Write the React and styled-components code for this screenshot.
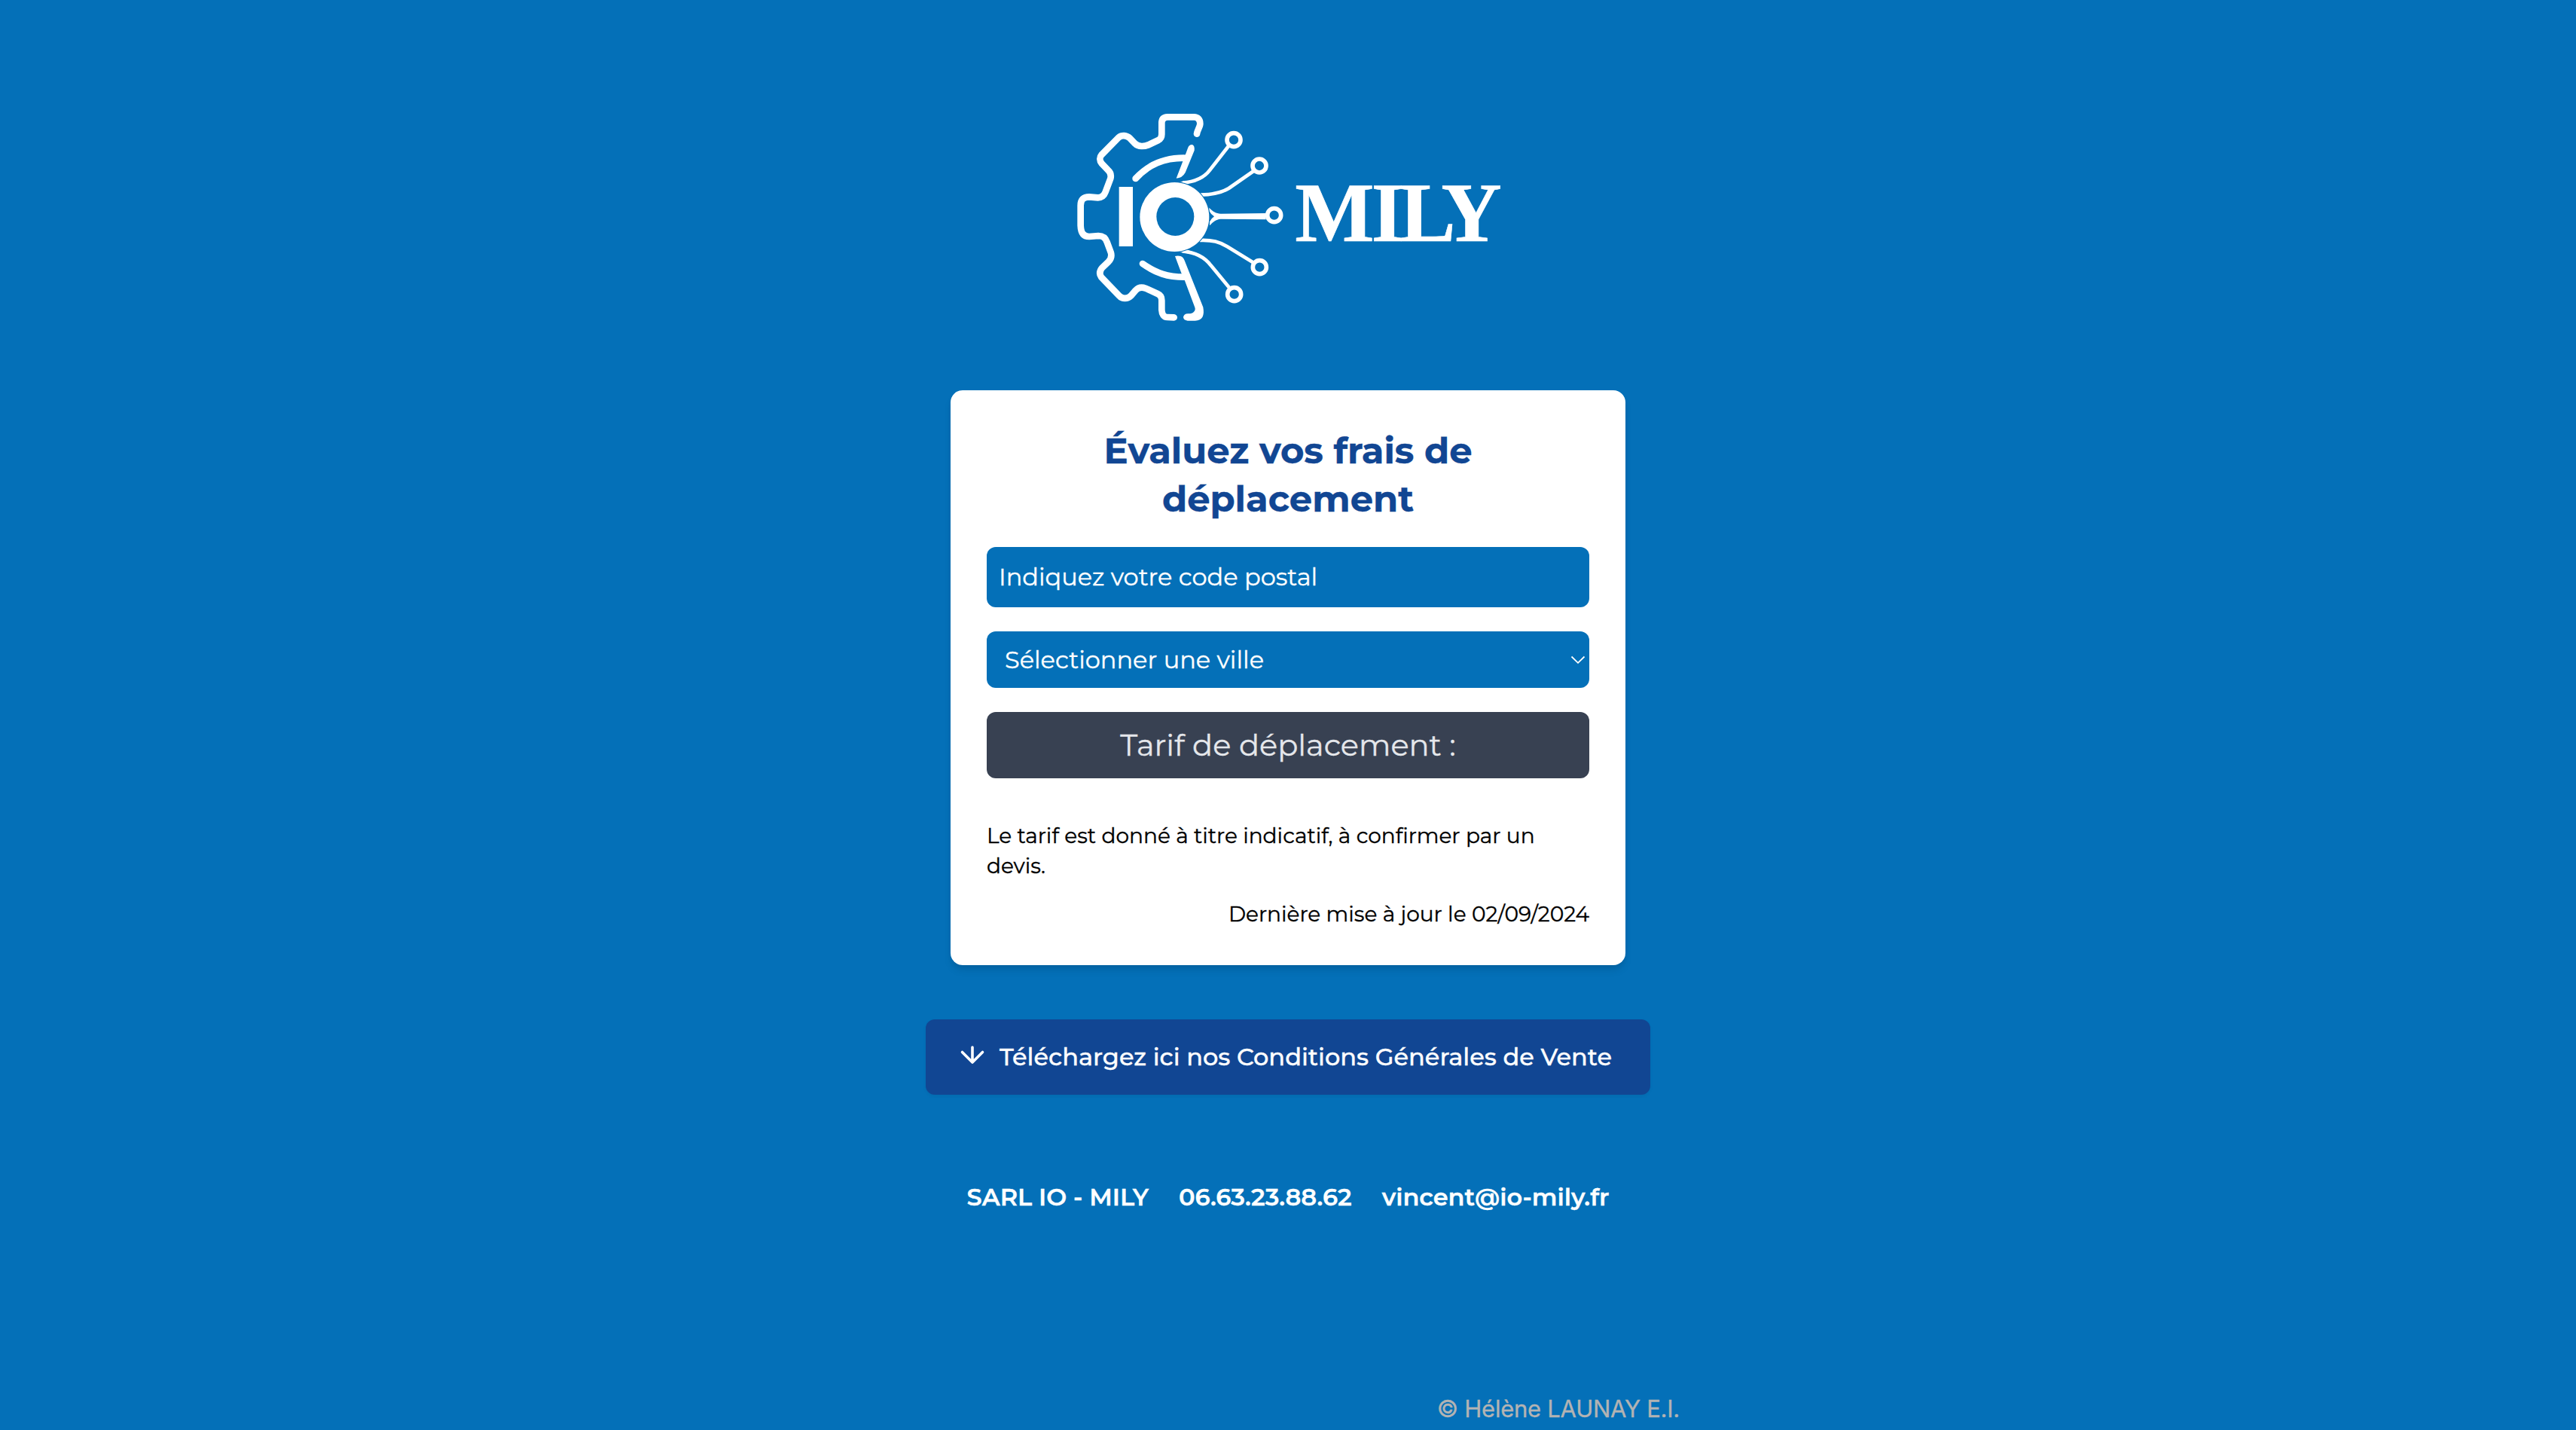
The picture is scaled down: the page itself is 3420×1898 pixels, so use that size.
import React from "react";
import styled, { createGlobalStyle } from "styled-components";

const BLUE = "#0470b8";
const NAVY = "#114693";

const GlobalStyle = createGlobalStyle`
  *, *::before, *::after { box-sizing: border-box; }
  body {
    margin: 0;
    background: ${BLUE};
    font-family: Montserrat, Inter, "Liberation Sans", sans-serif;
    -webkit-font-smoothing: antialiased;
    -webkit-text-stroke: 0.35px currentColor;
  }
  h1, p { margin: 0; }
`;

const Page = styled.div`
  min-height: 1898px;
  display: flex;
  flex-direction: column;
  align-items: center;
  padding-top: 130px;
  overflow: hidden;
`;

const LogoSvg = styled.svg`
  display: block;
  width: 600px;
  height: 310px;
  flex: none;
`;

const LogoText = styled.text`
  font-family: "Liberation Serif", "Times New Roman", serif;
  font-weight: 700;
  font-size: 111.5px;
  fill: #fff;
  stroke: #fff;
  stroke-width: 0.6px;
`;

const Card = styled.main`
  width: 896px;
  height: 763px;
  margin-top: 78px;
  padding: 48px;
  border-radius: 16px;
  background: #fff;
  box-shadow: 0 8px 12px -2px rgba(0, 0, 0, 0.1), 0 4px 8px -4px rgba(0, 0, 0, 0.1);
  display: flex;
  flex-direction: column;
`;

const Title = styled.h1`
  padding: 0 100px;
  color: ${NAVY};
  font-size: 48px;
  font-weight: 700;
  line-height: 64px;
  text-align: center;
`;

const PostalInput = styled.input`
  width: 100%;
  height: 80px;
  margin-top: 32px;
  padding: 0 16px 2px;
  border: 0;
  border-radius: 12px;
  background: ${BLUE};
  color: #fff;
  font: 400 32px/48px Montserrat, Inter, sans-serif;
  &::placeholder { color: #fff; opacity: 1; }
`;

const SelectWrap = styled.div`
  display: grid;
  align-items: center;
  margin-top: 32px;
`;

const CitySelect = styled.select`
  grid-area: 1 / 1;
  width: 100%;
  height: 75px;
  padding: 0 24px;
  border: 0;
  border-radius: 12px;
  appearance: none;
  background: ${BLUE};
  color: #fff;
  font: 400 32px/40px Montserrat, Inter, sans-serif;
`;

const Chevron = styled.svg`
  grid-area: 1 / 1;
  justify-self: end;
  width: 20px;
  height: 12px;
  margin-right: 5px;
  pointer-events: none;
`;

const Price = styled.p`
  height: 88px;
  margin-top: 32px;
  border-radius: 12px;
  background: #384152;
  color: #e5e7eb;
  font-size: 40px;
  line-height: 88px;
  text-align: center;
`;

const Note = styled.p`
  margin-top: ${(p) => p.$gap}px;
  color: #000;
  font-size: 28px;
  line-height: 40px;
  text-align: ${(p) => p.$align || "left"};
`;

const Download = styled.a`
  display: flex;
  align-items: center;
  width: 962px;
  height: 100px;
  margin-top: 72px;
  padding: 0 48px 2px 43px;
  border-radius: 12px;
  background: ${NAVY};
  color: #fff;
  font-size: 32px;
  font-weight: 500;
  white-space: nowrap;
  text-decoration: none;
  box-shadow: 0 2px 4px rgba(0, 0, 0, 0.05);
`;

const ArrowIcon = styled.svg`
  width: 40px;
  height: 40px;
  margin-right: 15px;
  flex: none;
`;

const Contact = styled.div`
  display: flex;
  gap: 40px;
  margin-top: 112px;
  color: #fff;
  font-size: 32px;
  font-weight: 600;
  line-height: 48px;
  white-space: nowrap;
`;

const Credit = styled.footer`
  width: 1040px;
  margin-top: auto;
  padding-bottom: 4px;
  color: #b3b3b3;
  font-family: Inter, "Liberation Sans", sans-serif;
  font-size: 31px;
  line-height: 48px;
  letter-spacing: -0.25px;
  text-align: right;
`;

const nodes = [[684, 167], [786, 270], [845, 467], [787, 674], [686, 782]];

function Logo() {
  return (
    <LogoSvg viewBox="0 0 600 310" role="img" aria-label="IO MILY">
      <g transform="scale(0.33333)" fill="none" stroke="#fff" strokeLinecap="round" strokeLinejoin="round">
        <g strokeWidth="26">
          <path d="M537 143 C538 130 550 115 550 103 C550 85 540 76 526 76 H420 Q397 77 397 100 V145 Q397 161 384 168 L346 186 C328 194 304 195 291 182 L271 161 C257 148 238 147 226 157 L157 227 C149 236 149 250 158 261 L183 287 Q198 300 193 321 L173 374 Q165 396 143 397 L108 394 Q74 394 74 428 V508 C75 535 84 552 108 552 L145 549 C163 549 174 559 179 574 L194 614 Q201 635 185 652 L160 676 Q144 695 156 713 L228 788 C240 802 262 800 275 787 L293 766 C304 754 318 752 333 758 L381 780 Q397 787 397 806 V844 C398 863 406 873 418 873 L446 874" />
          <path d="M293 321 C345 264 405 239 485 239" />
          <path d="M321 660 C375 698 420 713 488 713" />
        </g>
        <g strokeWidth="14" strokeLinecap="butt">
          <path d="M480 338 C535 334 567 316 589 287 L663 192" />
          <path d="M550 386 C600 385 633 379 664 360 L763 291" />
          <path d="M548 567 C600 565 627 573 658 592 L763 656" />
          <path d="M480 610 C535 615 570 636 593 667 L666 755" />
        </g>
        <path d="M470 334 L500 331 L504 343 Z M470 614 L506 606 L505 620 Z" fill="#fff" stroke="none" />
        <path d="M586 437 C600 452 614 460 632 461 L812 459 V484 L632 482 C612 484 602 493 588 508 V493 Q594 480 606 472 Q592 462 586 450 Z" fill="#fff" stroke="none" />
        <g strokeWidth="17">
          {nodes.map(([x, y]) => (
            <circle key={y} cx={x} cy={y} r="27" fill={BLUE} />
          ))}
        </g>
        <g fill="#fff" stroke="none">
          <path d="M502 197 Q508 184 519 186 Q529 190 527 209 L491 297 Q479 319 455 320 L482 250 L478 240 L492 224 Z" />
          <path d="M450 630 Q462 627 472 630 Q483 634 488 647 L562 833 C568 866 560 885 530 887 H500 Q484 885 483 873 Q485 859 502 859 C522 860 534 848 529 834 L488 725 L475 697 Z" />
          <circle cx="448" cy="474" r="141" fill={BLUE} />
          <circle cx="448" cy="474" r="138" />
          <ellipse cx="451" cy="472.500" rx="75" ry="76.500" fill={BLUE} />
          <rect x="227" y="354" width="55" height="237" />
        </g>
      </g>
      <LogoText x="309.200 410.600 448.200 503.300" y="190">MILY</LogoText>
    </LogoSvg>
  );
}

export default function App() {
  return (
    <>
      <GlobalStyle />
      <Page>
        <Logo />
        <Card>
          <Title>Évaluez vos frais de déplacement</Title>
          <PostalInput placeholder="Indiquez votre code postal" />
          <SelectWrap>
            <CitySelect>
              <option>Sélectionner une ville</option>
            </CitySelect>
            <Chevron viewBox="0 0 20 12" fill="none" stroke="#fff" strokeWidth="1.800">
              <path d="M1.500 1.500 L10 9.800 L18.500 1.500" />
            </Chevron>
          </SelectWrap>
          <Price>Tarif de déplacement :</Price>
          <Note $gap={56}>Le tarif est donné à titre indicatif, à confirmer par un devis.</Note>
          <Note $gap={24} $align="right">Dernière mise à jour le 02/09/2024</Note>
        </Card>
        <Download href="#">
          <ArrowIcon viewBox="0 0 40 40" fill="none" stroke="#fff" strokeWidth="3.600" strokeLinecap="round" strokeLinejoin="round">
            <path d="M19 8 V28 M5.500 14.500 L19 28 L32.500 14.500" />
          </ArrowIcon>
          Téléchargez ici nos Conditions Générales de Vente
        </Download>
        <Contact>
          <span>SARL IO - MILY</span>
          <span>06.63.23.88.62</span>
          <span>vincent@io-mily.fr</span>
        </Contact>
        <Credit>© Hélène LAUNAY E.I.</Credit>
      </Page>
    </>
  );
}
